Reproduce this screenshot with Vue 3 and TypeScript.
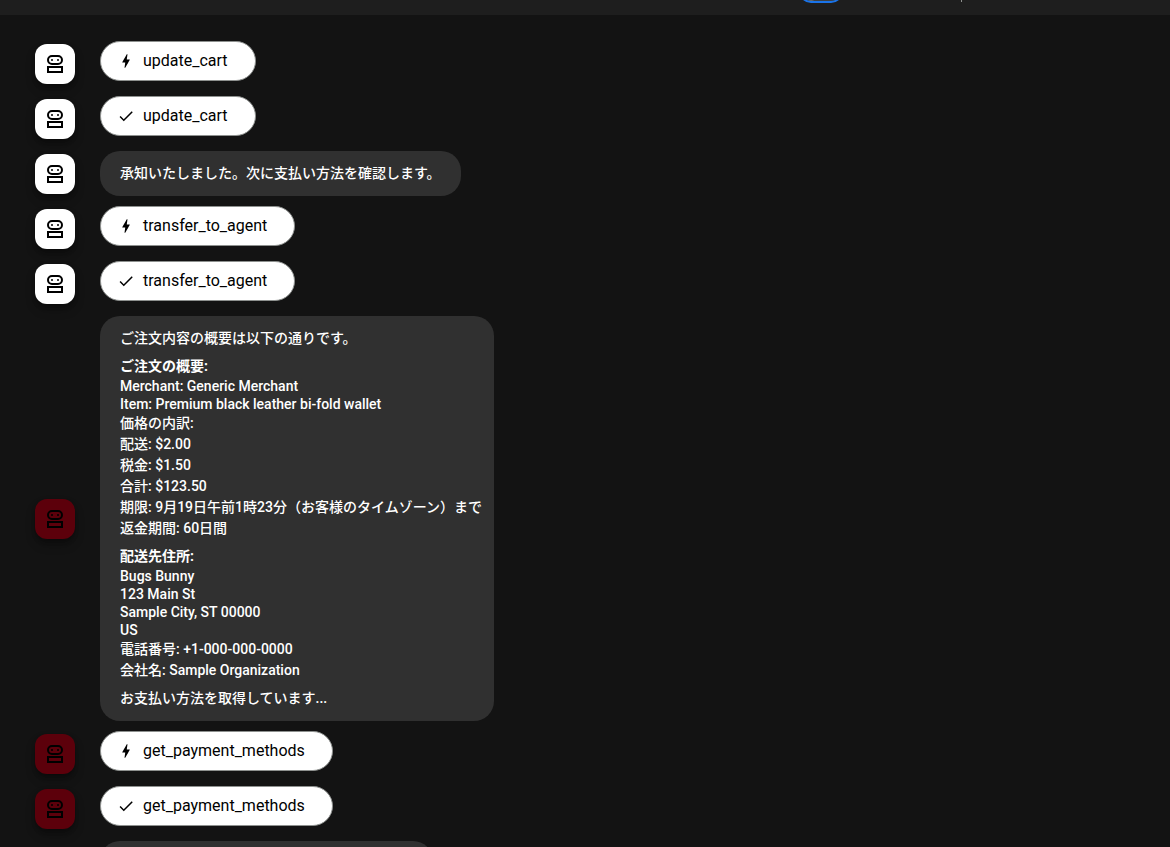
<script setup lang="ts">
interface Line {
  text: string
  bold?: boolean
}

interface Entry {
  id: number
  kind: 'call' | 'response' | 'message'
  agent: 'cart' | 'payment'
  name?: string
  paragraphs?: Line[][]
}

const entries: Entry[] = [
  { id: 1, kind: 'call', agent: 'cart', name: 'update_cart' },
  { id: 2, kind: 'response', agent: 'cart', name: 'update_cart' },
  {
    id: 3,
    kind: 'message',
    agent: 'cart',
    paragraphs: [[{ text: '承知いたしました。次に支払い方法を確認します。' }]],
  },
  { id: 4, kind: 'call', agent: 'cart', name: 'transfer_to_agent' },
  { id: 5, kind: 'response', agent: 'cart', name: 'transfer_to_agent' },
  {
    id: 6,
    kind: 'message',
    agent: 'payment',
    paragraphs: [
      [{ text: 'ご注文内容の概要は以下の通りです。' }],
      [
        { text: 'ご注文の概要:', bold: true },
        { text: 'Merchant: Generic Merchant' },
        { text: 'Item: Premium black leather bi-fold wallet' },
        { text: '価格の内訳:' },
        { text: '配送: $2.00' },
        { text: '税金: $1.50' },
        { text: '合計: $123.50' },
        { text: '期限: 9月19日午前1時23分（お客様のタイムゾーン）まで' },
        { text: '返金期間: 60日間' },
      ],
      [
        { text: '配送先住所:', bold: true },
        { text: 'Bugs Bunny' },
        { text: '123 Main St' },
        { text: 'Sample City, ST 00000' },
        { text: 'US' },
        { text: '電話番号: +1-000-000-0000' },
        { text: '会社名: Sample Organization' },
      ],
      [{ text: 'お支払い方法を取得しています...' }],
    ],
  },
  { id: 7, kind: 'call', agent: 'payment', name: 'get_payment_methods' },
  { id: 8, kind: 'response', agent: 'payment', name: 'get_payment_methods' },
]

const isLatin = (text: string): boolean => /^[\x20-\x7e]+$/.test(text)
</script>

<template>
  <div class="page">
    <header class="toolbar">
      <input class="toggle" type="checkbox" role="switch" aria-label="Token Streaming" />
      <span class="divider"></span>
    </header>

    <main class="events">
      <div v-for="entry in entries" :key="entry.id" class="row">
        <button class="avatar" :class="entry.agent" type="button" :aria-label="entry.agent">
          <svg viewBox="0 0 24 24" width="24" height="24" aria-hidden="true">
            <path
              fill-rule="evenodd"
              d="M9 13h6a5 5 0 0 0 0-10H9a5 5 0 0 0 0 10zM9 5h6a3 3 0 0 1 0 6H9a3 3 0 0 1 0-6zM4 14v7h16v-7zM6 16h12v3H6z"
            />
            <circle cx="9" cy="8" r="1" />
            <circle cx="15" cy="8" r="1" />
          </svg>
        </button>

        <div v-if="entry.kind === 'message'" class="bubble">
          <p v-for="(lines, p) in entry.paragraphs" :key="p">
            <span
              v-for="(line, l) in lines"
              :key="l"
              class="line"
              :class="{ latin: isLatin(line.text), bold: line.bold }"
              >{{ line.text }}</span
            >
          </p>
        </div>

        <button v-else class="chip" type="button">
          <svg viewBox="0 0 24 24" width="18" height="18" aria-hidden="true">
            <path
              v-if="entry.kind === 'call'"
              d="M11 21h-1l1-7H7.500c-.88 0-.33-.75-.31-.78C8.480 10.940 10.420 7.540 13.010 3h1l-1 7h3.510c.4 0 .62.190.4.660C12.970 17.550 11 21 11 21z"
            />
            <path v-else d="M9 16.170 4.830 12l-1.420 1.410L9 19 21 7l-1.410-1.410z" />
          </svg>
          <span>{{ entry.name }}</span>
        </button>
      </div>
      <div class="row">
        <div class="avatar-space"></div>
        <div class="bubble pending"></div>
      </div>
    </main>
  </div>
</template>

<style>
body {
  background: #131314;
}
</style>

<style scoped>
.page {
  height: 100vh;
  overflow: hidden;
  background: #131313;
  font-family: Roboto, 'Noto Sans CJK JP', sans-serif;
}

.toolbar {
  display: flex;
  justify-content: flex-end;
  height: 15px;
  padding-right: 208px;
  overflow: hidden;
  background: #1e1e1e;
}

.toggle {
  appearance: none;
  box-sizing: border-box;
  width: 44px;
  height: 24px;
  margin: -21px 118px 0 0;
  border: 2px solid #1a73e8;
  border-radius: 12px;
  background: radial-gradient(circle at 10px 10px, #8e918f 9px, #3c4043 10px);
}

.divider {
  width: 1px;
  height: 2px;
  background: #8e918f;
}

.events {
  display: flex;
  flex-direction: column;
  gap: 10px;
  padding: 26px 20px 0 35px;
}

.row {
  display: flex;
  align-items: center;
  min-height: 45px;
}

.avatar {
  display: flex;
  flex: none;
  align-items: center;
  justify-content: center;
  width: 40px;
  height: 40px;
  margin: 1px 25px 0 0;
  padding: 0;
  border: 0;
  border-radius: 12px;
  background: #fff;
  color: #000;
  box-shadow: 0 3px 5px -1px rgba(0, 0, 0, 0.3), 0 6px 10px rgba(0, 0, 0, 0.25);
}

.avatar.payment {
  background: #5c000b;
}

.avatar svg,
.chip svg {
  fill: currentColor;
}

.avatar-space {
  flex: none;
  width: 65px;
}

.chip {
  display: flex;
  align-items: center;
  gap: 8px;
  height: 40px;
  margin: 0 0 5px;
  padding: 0 27px 0 16px;
  border: 1px solid #8e918f;
  border-radius: 20px;
  background: #fff;
  color: #000;
  font-family: inherit;
  font-size: 16px;
  line-height: 20px;
}

.bubble {
  box-sizing: border-box;
  max-width: 394px;
  padding: 12px 20px;
  border-radius: 20px;
  background: #303030;
  color: #fff;
  font-size: 14px;
  font-weight: 500;
}

.bubble p {
  margin: 0;
}

.bubble p + p {
  margin-top: 7px;
}

.line {
  display: block;
  line-height: 21px;
  white-space: nowrap;
}

.line.latin {
  line-height: 18px;
}

.line.bold {
  font-weight: 700;
}

.pending {
  width: 333px;
  height: 45px;
}
</style>
